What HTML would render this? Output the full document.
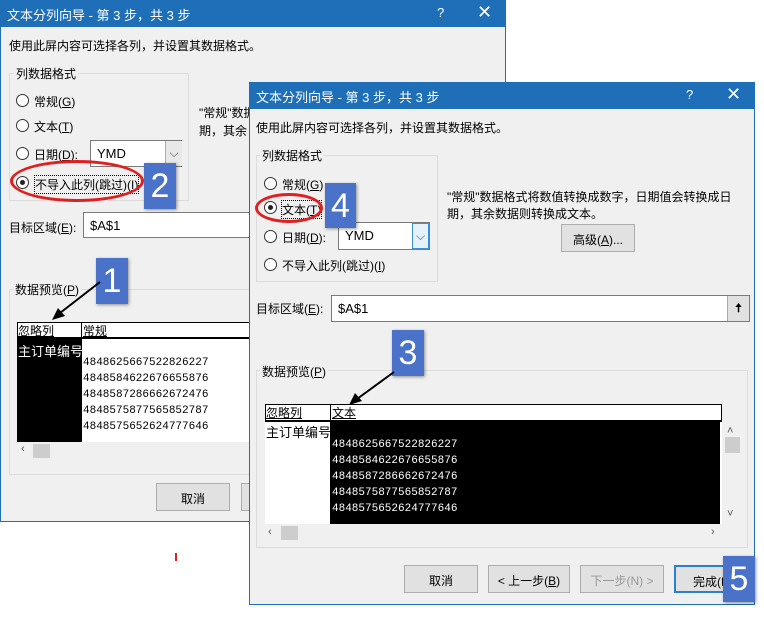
<!DOCTYPE html>
<html><head><meta charset="utf-8"><style>
*{margin:0;padding:0;box-sizing:border-box}
body{width:764px;height:618px;background:#fff;position:relative;overflow:hidden;font-family:"Liberation Sans","Noto Sans CJK SC",sans-serif;font-size:12px;color:#000}
.a{position:absolute;white-space:nowrap}
.dlg{position:absolute;background:#f0f0f0;border:1px solid #1e6eb8}
.tb{position:absolute;left:0;top:0;right:0;height:26px;background:#1e6eb8;color:#fff;font-size:13px;padding:4px 0 0 6px}
.grp{position:absolute;border:1px solid #dcdcdc}
.rad{position:absolute;width:13px;height:13px;border:1px solid #333;border-radius:50%;background:#fff}
.rad.on:after{content:"";position:absolute;left:3px;top:3px;width:5px;height:5px;border-radius:50%;background:#222}
.inp{position:absolute;background:#fff;border:1px solid #7a7a7a;padding:5px 0 0 6px;font-size:13px}
.btn{position:absolute;background:#e1e1e1;border:1px solid #adadad;text-align:center;padding-top:6px;font-size:12px}
.badge{position:absolute;background:#4a72c8;color:#fff;font-size:34px;text-align:center;line-height:46px;box-shadow:1px 1px 3px rgba(0,0,0,.4)}
.mono{font-family:"Liberation Mono",monospace;font-size:11px;line-height:16px}
</style></head><body>

<!-- back dialog -->
<div class="dlg" style="left:0;top:0;width:506px;height:522px">
<div class="tb">文本分列向导 - 第 3 步，共 3 步<span class="a" style="left:436px;top:4px">?</span><span class="a" style="left:476px;top:1px;font-size:18px">✕</span></div>
<div class="a" style="left:8px;top:36px">使用此屏内容可选择各列，并设置其数据格式。</div>
<div class="grp" style="left:8px;top:72px;width:180px;height:128px"></div>
<div class="a" style="left:13px;top:64px;background:#f0f0f0;padding:0 2px">列数据格式</div>
<div class="rad" style="left:15px;top:93px"></div><div class="a" style="left:33px;top:92px">常规(<u>G</u>)</div>
<div class="rad" style="left:15px;top:118px"></div><div class="a" style="left:33px;top:117px">文本(<u>T</u>)</div>
<div class="rad" style="left:15px;top:146px"></div><div class="a" style="left:33px;top:145px">日期(<u>D</u>):</div>
<div class="inp" style="left:89px;top:139px;width:92px;height:27px">YMD</div>
<div class="a" style="left:164px;top:140px;width:17px;height:25px;background:#e8e8e8;border-left:1px solid #aaa;text-align:center;color:#555;padding-top:5px">⌵</div>
<div class="rad on" style="left:15px;top:175px"></div><div class="a" style="left:33px;top:174px;border:1px dotted #000">不导入此列(跳过)(<u>I</u>)</div>
<div class="a" style="left:198px;top:103px">"常规"数据</div>
<div class="a" style="left:198px;top:121px">期，其余</div>
<div class="a" style="left:8px;top:218px">目标区域(<u>E</u>):</div>
<div class="inp" style="left:82px;top:211px;width:170px;height:26px;border-right:none">$A$1</div>
<div class="grp" style="left:8px;top:288px;width:250px;height:186px"></div>
<div class="a" style="left:12px;top:280px;background:#f0f0f0;padding:0 2px">数据预览(<u>P</u>)</div>
<div class="a" style="left:16px;top:321px;width:240px;height:120px;background:#fff"></div>
<div class="a" style="left:16px;top:321px;width:240px;height:17px;border:1px solid #000;border-bottom:2px solid #000"></div>
<div class="a" style="left:80px;top:321px;width:1px;height:120px;background:#000"></div>
<div class="a" style="left:16px;top:338px;width:64px;height:103px;background:#000"></div>
<div class="a" style="left:17px;top:321px;font-size:12px;text-decoration:underline">忽略列</div>
<div class="a" style="left:82px;top:321px;text-decoration:underline">常规</div>
<div class="a" style="left:17px;top:340px;color:#fff;font-size:13px">主订单编号</div>
<div class="a mono" style="left:82px;top:354px">4848625667522826227<br>4848584622676655876<br>4848587286662672476<br>4848575877565852787<br>4848575652624777646</div>
<div class="a" style="left:20px;top:442px;color:#555;font-size:11px">‹</div>
<div class="a" style="left:32px;top:443px;width:17px;height:14px;background:#cdcdcd"></div>
<div class="btn" style="left:155px;top:482px;width:74px;height:28px">取消</div>
<div class="btn" style="left:240px;top:482px;width:20px;height:28px"></div>
</div>

<div class="a" style="left:10px;top:160px;width:134px;height:42px;border:3px solid #e02020;border-radius:50%"></div>
<div class="badge" style="left:144px;top:163px;width:32px;height:46px">2</div>
<div class="badge" style="left:96px;top:258px;width:32px;height:46px">1</div>

<!-- front dialog -->
<div class="dlg" style="left:249px;top:82px;width:506px;height:523px">
<div class="tb">文本分列向导 - 第 3 步，共 3 步<span class="a" style="left:436px;top:4px">?</span><span class="a" style="left:476px;top:1px;font-size:18px">✕</span></div>
</div>
<div class="a" style="left:256px;top:119px">使用此屏内容可选择各列，并设置其数据格式。</div>
<div class="grp" style="left:256px;top:155px;width:182px;height:127px"></div>
<div class="a" style="left:260px;top:147px;background:#f0f0f0;padding:0 2px">列数据格式</div>
<div class="rad" style="left:264px;top:177px"></div><div class="a" style="left:282px;top:176px">常规(<u>G</u>)</div>
<div class="rad on" style="left:264px;top:201px"></div><div class="a" style="left:281px;top:200px;border:1px dotted #000">文本(<u>T</u>)</div>
<div class="rad" style="left:264px;top:230px"></div><div class="a" style="left:282px;top:229px">日期(<u>D</u>):</div>
<div class="inp" style="left:338px;top:222px;width:92px;height:28px">YMD</div>
<div class="a" style="left:412px;top:223px;width:17px;height:26px;border:1px solid #3c8fd8;background:#e5f1fb;text-align:center;color:#555;padding-top:5px">⌵</div>
<div class="rad" style="left:264px;top:258px"></div><div class="a" style="left:282px;top:257px">不导入此列(跳过)(<u>I</u>)</div>
<div class="a" style="left:447px;top:188px">"常规"数据格式将数值转换成数字，日期值会转换成日</div>
<div class="a" style="left:447px;top:205px">期，其余数据则转换成文本。</div>
<div class="btn" style="left:561px;top:224px;width:74px;height:28px">高级(<u>A</u>)...</div>
<div class="a" style="left:256px;top:300px">目标区域(<u>E</u>):</div>
<div class="inp" style="left:331px;top:295px;width:419px;height:27px">$A$1</div>
<div class="a" style="left:727px;top:296px;width:22px;height:25px;background:#e1e1e1;border-left:1px solid #aaa;text-align:center;font-weight:bold;padding-top:3px">🠅</div>
<div class="grp" style="left:256px;top:370px;width:492px;height:178px"></div>
<div class="a" style="left:260px;top:363px;background:#f0f0f0;padding:0 2px">数据预览(<u>P</u>)</div>
<div class="a" style="left:265px;top:404px;width:457px;height:120px;background:#fff"></div>
<div class="a" style="left:265px;top:404px;width:457px;height:18px;border:1px solid #000;border-bottom:2px solid #000"></div>
<div class="a" style="left:330px;top:404px;width:1px;height:120px;background:#000"></div>
<div class="a" style="left:331px;top:422px;width:389px;height:102px;background:#000"></div>
<div class="a" style="left:266px;top:404px;text-decoration:underline">忽略列</div>
<div class="a" style="left:332px;top:404px;text-decoration:underline">文本</div>
<div class="a" style="left:266px;top:422px;font-size:13px">主订单编号</div>
<div class="a mono" style="left:332px;top:437px;color:#fff">4848625667522826227<br>4848584622676655876<br>4848587286662672476<br>4848575877565852787<br>4848575652624777646</div>
<div class="a" style="left:727px;top:425px;color:#555;font-size:11px">˄</div>
<div class="a" style="left:725px;top:437px;width:15px;height:16px;background:#cdcdcd"></div>
<div class="a" style="left:727px;top:508px;color:#555;font-size:11px">˅</div>
<div class="a" style="left:268px;top:526px;color:#555;font-size:11px">‹</div>
<div class="a" style="left:281px;top:526px;width:17px;height:14px;background:#cdcdcd"></div>
<div class="a" style="left:711px;top:526px;color:#555;font-size:11px">›</div>
<div class="btn" style="left:404px;top:565px;width:74px;height:28px">取消</div>
<div class="btn" style="left:488px;top:565px;width:82px;height:28px">&lt; 上一步(<u>B</u>)</div>
<div class="btn" style="left:580px;top:565px;width:84px;height:28px;color:#999">下一步(N) &gt;</div>
<div class="btn" style="left:674px;top:565px;width:60px;height:28px;border:2px solid #2a7fd4;text-align:left;padding-left:17px">完成(F</div>
<div class="a" style="left:255px;top:193px;width:68px;height:30px;border:3px solid #e02020;border-radius:50%"></div>
<div class="badge" style="left:325px;top:183px;width:31px;height:45px">4</div>
<div class="badge" style="left:392px;top:330px;width:32px;height:46px">3</div>
<div class="badge" style="left:723px;top:556px;width:32px;height:46px">5</div>
<svg class="a" style="left:0;top:0" width="764" height="618"><line x1="100" y1="282" x2="60" y2="313" stroke="#000" stroke-width="2"/><polygon points="52,320 58,308 65,316" fill="#000"/><line x1="394" y1="372" x2="357" y2="399" stroke="#000" stroke-width="2"/><polygon points="349,405 355,393 362,401" fill="#000"/><line x1="176" y1="553" x2="176" y2="561" stroke="#e02020" stroke-width="2"/></svg>
</body></html>
